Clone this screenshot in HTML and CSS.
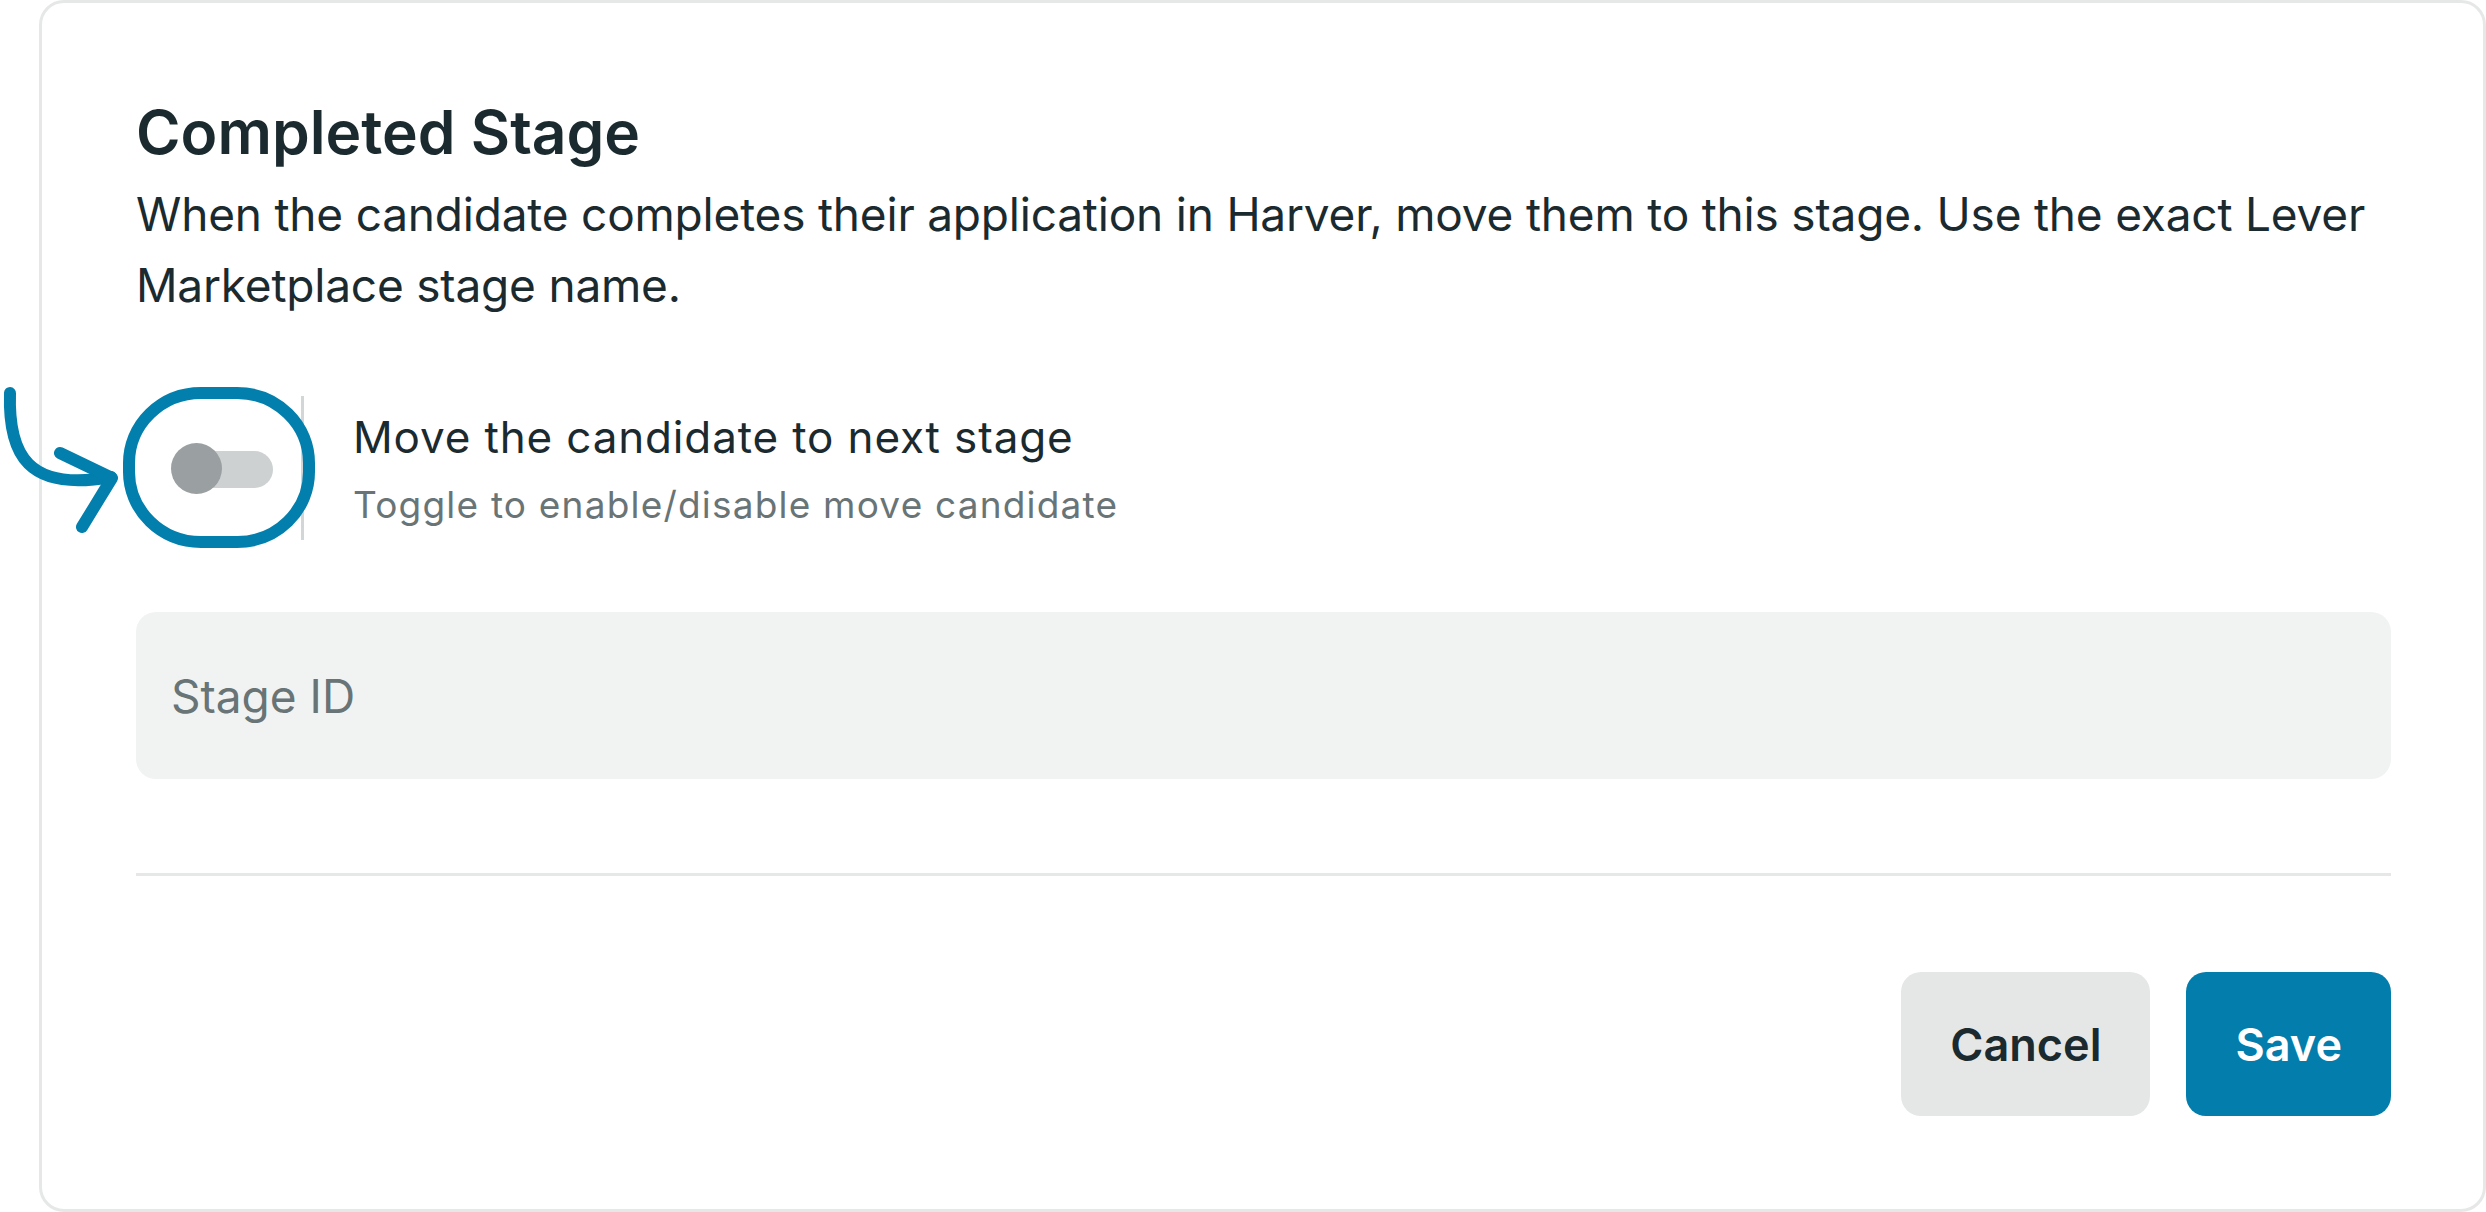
FILE: index.html
```html
<!DOCTYPE html>
<html lang="en">
<head>
<meta charset="utf-8">
<title>Completed Stage</title>
<link rel="stylesheet" href="styles.css">
</head>
<body>
<div class="card">
  <h1 class="title">Completed Stage</h1>
  <p class="desc">When the candidate completes their application in Harver, move them to this stage. Use the exact Lever Marketplace stage name.</p>
  <div class="toggle-row">
    <div class="toggle-cell">
      <span class="switch"><span class="track"></span><span class="knob"></span></span>
    </div>
    <div class="toggle-text">
      <div class="toggle-label">Move the candidate to next stage</div>
      <div class="toggle-sub">Toggle to enable/disable move candidate</div>
    </div>
  </div>
  <div class="field"><input class="field-input" type="text" placeholder="Stage ID"></div>
  <hr class="sep">
  <div class="actions">
    <button class="btn btn-cancel">Cancel</button>
    <button class="btn btn-save">Save</button>
  </div>
</div>
<svg class="annotation" viewBox="0 0 2486 1212" width="2486" height="1212" aria-hidden="true">
  <rect x="129" y="393" width="180" height="149" rx="72" ry="70" fill="none" stroke="#027fac" stroke-width="12"/>
  <path d="M10 393 C 8 455, 28 492, 111 477" fill="none" stroke="#027fac" stroke-width="12" stroke-linecap="round"/>
  <path d="M60 453 L 112 478 L 82 527" fill="none" stroke="#027fac" stroke-width="12" stroke-linecap="round" stroke-linejoin="round"/>
</svg>
</body>
</html>
```
FILE: styles.css
```css
html, body {
  margin: 0;
  padding: 0;
  background: #ffffff;
}
body {
  font-family: Inter, "Noto Sans", sans-serif;
  color: #1b2a2f;
  position: relative;
  width: 2486px;
  height: 1212px;
  overflow: hidden;
}
.card {
  box-sizing: border-box;
  margin-left: 39px;
  width: 2447px;
  height: 1212px;
  border: 3px solid #e6e7e7;
  border-radius: 25px;
  padding: 93px 92px 93px 94px;
}
.title {
  margin: 0;
  font-size: 60.5px;
  line-height: 72px;
  font-weight: 600;
  color: #1b2a2f;
}
.desc {
  margin: 11px 0 0 0;
  font-size: 46px;
  line-height: 71px;
  letter-spacing: -0.2px;
  font-weight: 400;
}
.toggle-row {
  margin-top: 75px;
  height: 144px;
  display: flex;
  align-items: center;
}
.toggle-cell {
  box-sizing: border-box;
  width: 168px;
  height: 144px;
  padding-left: 35px;
  border-right: 3px solid #d3d6d6;
  display: flex;
  align-items: center;
}
.switch {
  position: relative;
  display: block;
  width: 102px;
  height: 51px;
}
.track {
  position: absolute;
  left: 10px;
  top: 8px;
  width: 92px;
  height: 37px;
  border-radius: 19px;
  background: #cdd1d1;
}
.knob {
  position: absolute;
  left: 0;
  top: 0;
  width: 51px;
  height: 51px;
  border-radius: 50%;
  background: #9aa0a1;
}
.toggle-text {
  margin-left: 49px;
  display: flex;
  flex-direction: column;
  gap: 11px;
}
.toggle-label {
  font-size: 44px;
  line-height: 62px;
  letter-spacing: 0.85px;
  color: #1b2a2f;
}
.toggle-sub {
  font-size: 37px;
  line-height: 52px;
  letter-spacing: 1.2px;
  color: #687476;
}
.field {
  margin-top: 72px;
  height: 167px;
  border-radius: 20px;
  background: #f1f3f2;
  display: flex;
  align-items: center;
  padding-left: 35px;
}
.field-input {
  flex: 1;
  border: 0;
  outline: none;
  background: transparent;
  font-family: Inter, "Noto Sans", sans-serif;
  font-size: 46px;
  color: #1b2a2f;
  padding: 0;
}
.field-input::placeholder {
  color: #687476;
  opacity: 1;
}
.sep {
  margin: 94px 0 0 0;
  height: 3px;
  border: 0;
  background: #e6e7e7;
}
.actions {
  margin-top: 96px;
  display: flex;
  justify-content: flex-end;
  gap: 36px;
}
.btn {
  height: 144px;
  border: 0;
  border-radius: 20px;
  padding: 0 49px;
  font-family: Inter, "Noto Sans", sans-serif;
  font-size: 45px;
  font-weight: 600;
}
.btn-cancel {
  background: #e5e7e6;
  color: #1b2a2f;
}
.btn-save {
  background: #027dac;
  color: #ffffff;
}
.annotation {
  position: absolute;
  left: 0;
  top: 0;
  pointer-events: none;
}
```
